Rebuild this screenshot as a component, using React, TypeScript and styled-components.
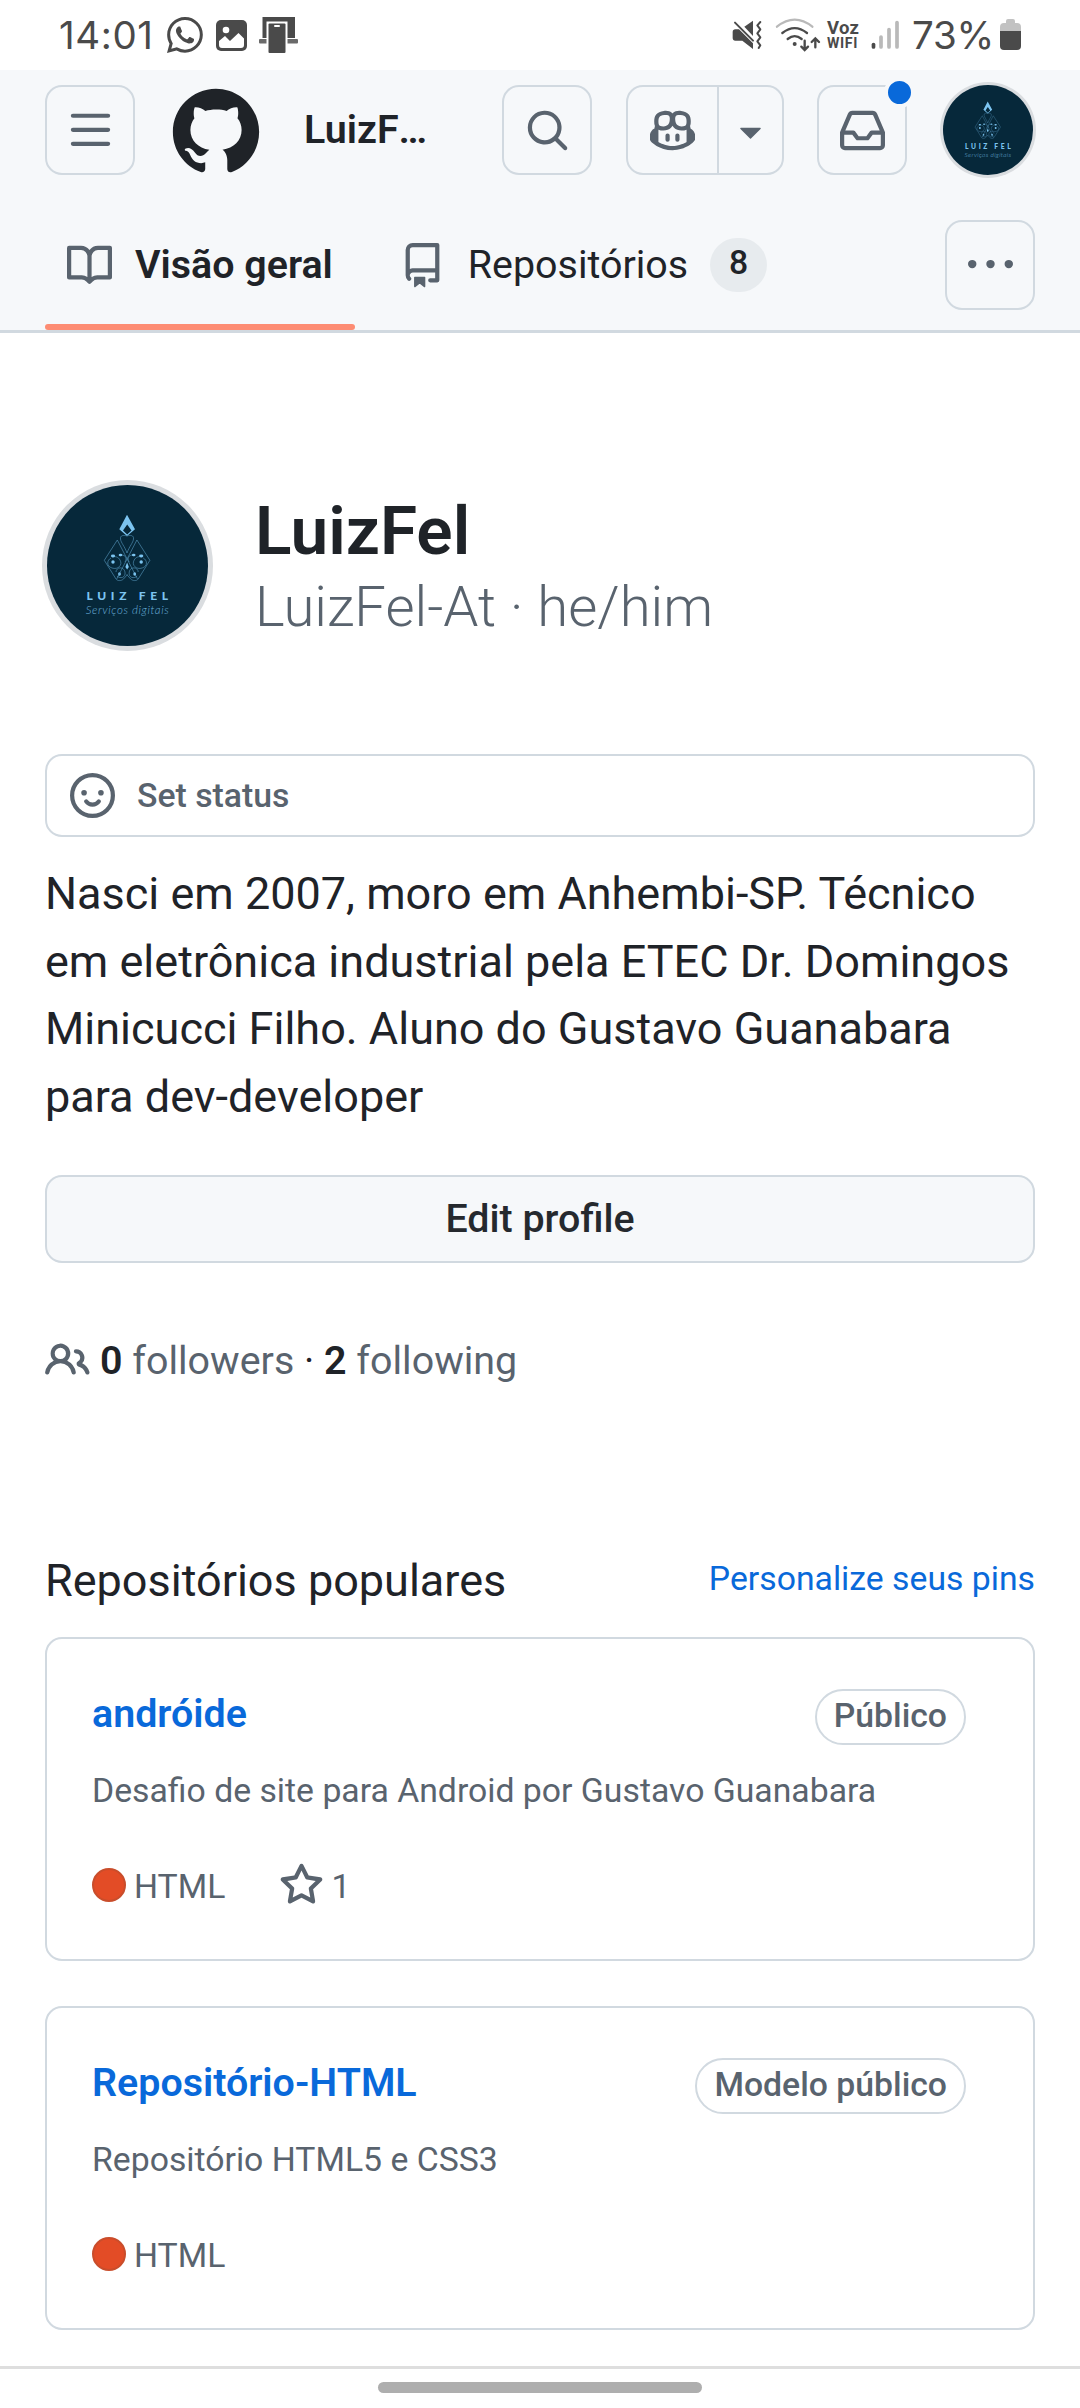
import React from "react";
import styled, { createGlobalStyle } from "styled-components";
import { BsWhatsapp } from "react-icons/bs";

const c = {
  fg: "#1f2328",
  muted: "#59636e",
  border: "#d1d9e0",
  subtle: "#f6f8fa",
  link: "#0969da",
  status: "#4a4a4a",
  faint: "#b9b9b9",
};

const paths = {
  menu: "M1 2.75A.75.75 0 0 1 1.75 2h12.5a.75.75 0 0 1 0 1.5H1.75A.75.75 0 0 1 1 2.75Zm0 5A.75.75 0 0 1 1.75 7h12.5a.75.75 0 0 1 0 1.5H1.75A.75.75 0 0 1 1 7.75ZM1.75 12h12.5a.75.75 0 0 1 0 1.5H1.75a.75.75 0 0 1 0-1.5Z",
  search:
    "M10.68 11.74a6 6 0 0 1-7.922-8.982 6 6 0 0 1 8.982 7.922l3.04 3.04a.749.749 0 0 1-.326 1.275.749.749 0 0 1-.734-.215ZM11.5 7a4.499 4.499 0 1 0-8.997 0A4.499 4.499 0 0 0 11.5 7Z",
  copilot:
    "M7.998 15.035c-4.562 0-7.873-2.914-7.998-3.749V9.338c.085-.628.677-1.686 1.588-2.065.013-.07.024-.143.036-.218.029-.183.06-.384.126-.612-.201-.508-.254-1.084-.254-1.656 0-.87.128-1.769.693-2.484.579-.733 1.494-1.124 2.724-1.261 1.206-.134 2.262.034 2.944.765.05.053.096.108.139.165.044-.057.094-.112.143-.165.682-.731 1.738-.899 2.944-.765 1.23.137 2.145.528 2.724 1.261.566.715.693 1.614.693 2.484 0 .572-.053 1.148-.254 1.656.066.228.098.429.126.612.012.076.024.148.037.218.924.385 1.522 1.471 1.591 2.095v1.872c0 .766-3.351 3.795-8.002 3.795Zm0-1.485c2.28 0 4.584-1.11 5.002-1.433V7.862l-.023-.116c-.49.21-1.075.291-1.727.291-1.146 0-2.059-.327-2.71-.991A3.222 3.222 0 0 1 8 6.303a3.24 3.24 0 0 1-.544.743c-.65.664-1.563.991-2.71.991-.652 0-1.236-.081-1.727-.291l-.023.116v4.255c.419.323 2.722 1.433 5.002 1.433ZM6.762 2.83c-.193-.206-.637-.413-1.682-.297-1.019.113-1.479.404-1.713.7-.247.312-.369.789-.369 1.554 0 .793.129 1.171.308 1.371.162.181.519.379 1.442.379.853 0 1.339-.235 1.638-.54.315-.322.527-.827.617-1.553.117-.935-.037-1.395-.241-1.614Zm4.155-.297c-1.044-.116-1.488.091-1.681.297-.204.219-.359.679-.242 1.614.091.726.303 1.231.618 1.553.299.305.784.54 1.638.54.922 0 1.28-.198 1.442-.379.179-.2.308-.578.308-1.371 0-.765-.123-1.242-.37-1.554-.233-.296-.693-.587-1.713-.7ZM6.25 9.037a.75.75 0 0 1 .75.75v1.501a.75.75 0 0 1-1.5 0V9.787a.75.75 0 0 1 .75-.75Zm4.25.75v1.501a.75.75 0 0 1-1.5 0V9.787a.75.75 0 0 1 1.5 0Z",
  triangle:
    "m4.427 7.427 3.396 3.396a.25.25 0 0 0 .354 0l3.396-3.396A.25.25 0 0 0 11.396 7H4.604a.25.25 0 0 0-.177.427Z",
  inbox:
    "M2.8 2.06A1.75 1.75 0 0 1 4.41 1h7.18c.7 0 1.333.417 1.61 1.06l2.74 6.395c.04.093.06.194.06.295v4.5A1.75 1.75 0 0 1 14.25 15H1.75A1.75 1.75 0 0 1 0 13.25v-4.5c0-.101.02-.202.06-.295Zm1.61.44a.25.25 0 0 0-.23.152L1.887 8H4.75a.75.75 0 0 1 .6.3L6.625 10h2.75l1.275-1.7a.75.75 0 0 1 .6-.3h2.863L11.82 2.652a.25.25 0 0 0-.23-.152Zm10.09 7h-2.875l-1.275 1.7a.75.75 0 0 1-.6.3h-3.5a.75.75 0 0 1-.6-.3L4.375 9.5H1.5v3.75c0 .138.112.25.25.25h12.5a.25.25 0 0 0 .25-.25Z",
  book: "M0 1.75A.75.75 0 0 1 .75 1h4.253c1.227 0 2.317.59 3 1.501A3.743 3.743 0 0 1 11.006 1h4.245a.75.75 0 0 1 .75.75v10.5a.75.75 0 0 1-.75.75h-4.507a2.25 2.25 0 0 0-1.591.659l-.622.621a.75.75 0 0 1-1.06 0l-.622-.621A2.25 2.25 0 0 0 5.258 13H.75a.75.75 0 0 1-.75-.75Zm7.251 10.324.004-5.073-.002-2.253A2.25 2.25 0 0 0 5.003 2.5H1.5v9h3.757a3.75 3.75 0 0 1 1.994.574ZM8.755 4.75l-.004 7.322a3.752 3.752 0 0 1 1.992-.572H14.5v-9h-3.495a2.25 2.25 0 0 0-2.25 2.25Z",
  repo: "M2 2.5A2.5 2.5 0 0 1 4.5 0h8.75a.75.75 0 0 1 .75.75v12.5a.75.75 0 0 1-.75.75h-2.5a.75.75 0 0 1 0-1.5h1.75v-2h-8a1 1 0 0 0-.714 1.7.75.75 0 1 1-1.072 1.05A2.495 2.495 0 0 1 2 11.5Zm10.5-1h-8a1 1 0 0 0-1 1v6.708A2.486 2.486 0 0 1 4.5 9h8ZM5 12.25a.25.25 0 0 1 .25-.25h3.5a.25.25 0 0 1 .25.25v3.25a.25.25 0 0 1-.4.2l-1.45-1.087a.249.249 0 0 0-.3 0L5.4 15.7a.25.25 0 0 1-.4-.2Z",
  dots: "M8 9a1.5 1.5 0 1 0 0-3 1.5 1.5 0 0 0 0 3ZM1.5 9a1.5 1.5 0 1 0 0-3 1.5 1.5 0 0 0 0 3Zm13 0a1.5 1.5 0 1 0 0-3 1.5 1.5 0 0 0 0 3Z",
  people:
    "M2 5.5a3.5 3.5 0 1 1 5.898 2.549 5.508 5.508 0 0 1 3.034 4.084.75.75 0 1 1-1.482.235 4 4 0 0 0-7.9 0 .75.75 0 0 1-1.482-.236A5.507 5.507 0 0 1 3.102 8.05 3.493 3.493 0 0 1 2 5.5ZM11 4a3.001 3.001 0 0 1 2.22 5.018 5.01 5.01 0 0 1 2.56 3.012.749.749 0 0 1-.885.954.752.752 0 0 1-.549-.514 3.507 3.507 0 0 0-2.522-2.372.75.75 0 0 1-.574-.73v-.352a.75.75 0 0 1 .416-.672A1.5 1.5 0 0 0 11 5.5.75.75 0 0 1 11 4Zm-5.5-.5a2 2 0 1 0-.001 3.999A2 2 0 0 0 5.5 3.5Z",
  star: "M8 .25a.75.75 0 0 1 .673.418l1.882 3.815 4.21.612a.75.75 0 0 1 .416 1.279l-3.046 2.97.719 4.192a.751.751 0 0 1-1.088.791L8 12.347l-3.766 1.98a.75.75 0 0 1-1.088-.79l.72-4.194L.818 6.374a.75.75 0 0 1 .416-1.28l4.21-.611L7.327.668A.75.75 0 0 1 8 .25Zm0 2.445L6.615 5.5a.75.75 0 0 1-.564.41l-3.097.45 2.24 2.184a.75.75 0 0 1 .216.664l-.528 3.084 2.769-1.456a.75.75 0 0 1 .698 0l2.77 1.456-.53-3.084a.75.75 0 0 1 .216-.664l2.24-2.183-3.096-.45a.75.75 0 0 1-.564-.41L8 2.694Z",
};

const GlobalStyle = createGlobalStyle`
  *, *::before, *::after { box-sizing: border-box; }
  body {
    margin: 0;
    background: #fff;
    color: ${c.fg};
    font-family: Roboto, "Noto Sans", sans-serif;
  }
  h1, h2, p { margin: 0; font-weight: 400; }
  button { font: inherit; color: inherit; padding: 0; }
  svg { display: block; flex: none; }
`;

const Screen = styled.div`
  width: 1080px;
  height: 2408px;
  display: flex;
  flex-direction: column;
  overflow: hidden;
`;

/* ---------- Android status bar ---------- */

const StatusBar = styled.div`
  height: 70px;
  flex: none;
  display: flex;
  align-items: center;
  justify-content: space-between;
  padding: 0 59px 0 59px;
  color: ${c.status};
`;

const StatusGroup = styled.div`
  display: flex;
  align-items: center;
`;

const StatusText = styled.span<{ $width: number; $tracking: number }>`
  width: ${(p) => p.$width}px;
  font-family: Inter, Roboto, sans-serif;
  font-size: 38.5px;
  line-height: 70px;
  font-weight: 400;
  letter-spacing: ${(p) => p.$tracking}px;
  white-space: nowrap;
`;

const StatusSlot = styled.span<{ $gap: number }>`
  display: flex;
  margin-right: ${(p) => p.$gap}px;
`;

const WifiCall = styled.span`
  width: 44px;
  margin-left: -1px;
  display: flex;
  flex-direction: column;
  font-weight: 700;
  white-space: nowrap;
`;

const CallTop = styled.span`
  font-size: 18.5px;
  line-height: 16px;
  letter-spacing: 0.3px;
`;

const CallBottom = styled.span`
  font-size: 14.2px;
  line-height: 14px;
  letter-spacing: 0.6px;
`;

/* ---------- GitHub header ---------- */

const Header = styled.header`
  height: 263px;
  flex: none;
  background: ${c.subtle};
  box-shadow: inset 0 -3px 0 ${c.border};
`;

const TopRow = styled.div`
  display: flex;
  align-items: center;
  padding: 15px 47px 0 45px;
`;

const IconButton = styled.button`
  width: 90px;
  height: 90px;
  flex: none;
  display: flex;
  align-items: center;
  justify-content: center;
  position: relative;
  background: transparent;
  border: 2px solid ${c.border};
  border-radius: 17px;
  color: ${c.muted};
`;

const LogoLink = styled.a`
  margin-left: 36px;
  color: ${c.fg};
`;

const Context = styled.strong`
  display: flex;
  margin-left: 43px;
  width: 198px;
  font-size: 39.4px;
  line-height: 56px;
  font-weight: 600;
`;

const ButtonPair = styled.div`
  display: flex;
  width: 158px;
  height: 90px;
  margin: 0 33px 0 34px;
  border: 2px solid ${c.border};
  border-radius: 17px;
`;

const PairPart = styled.button<{ $width: number; $divided?: boolean }>`
  width: ${(p) => p.$width}px;
  display: flex;
  align-items: center;
  justify-content: center;
  background: transparent;
  border: 0;
  border-right: ${(p) => (p.$divided ? `2px solid ${c.border}` : "0")};
  color: ${c.muted};
`;

const UnreadDot = styled.span`
  position: absolute;
  top: -10px;
  right: -10px;
  width: 31px;
  height: 31px;
  border: 4px solid ${c.subtle};
  border-radius: 50%;
  background: ${c.link};
`;

const Avatar = styled.span<{ $size: number; $ring: number }>`
  width: ${(p) => p.$size}px;
  height: ${(p) => p.$size}px;
  flex: none;
  display: block;
  overflow: hidden;
  border-radius: 50%;
  background: #06283a;
  box-shadow: 0 0 0 ${(p) => p.$ring}px #dadde0;
`;

const AvatarSlot = styled.a`
  margin-left: 36px;
`;

const Tabs = styled.nav`
  display: flex;
  align-items: flex-start;
  height: 158px;
  padding: 45px 45px 0;
`;

const Tab = styled.a<{ $current?: boolean }>`
  position: relative;
  height: 113px;
  display: flex;
  align-items: center;
  padding: 0 22px 24px 22px;
  font-size: 39.4px;
  line-height: 56px;
  font-weight: ${(p) => (p.$current ? 600 : 400)};
  white-space: nowrap;

  & + & {
    margin-left: 23px;
  }

  svg {
    color: ${c.muted};
    margin: 1px 23px 0 0;
  }

  &::after {
    content: "";
    display: ${(p) => (p.$current ? "block" : "none")};
    position: absolute;
    left: 0;
    right: 0;
    bottom: 3px;
    height: 6px;
    border-radius: 4px;
    background: #fd8c73;
  }
`;

const Counter = styled.span`
  margin: 1px 0 0 22px;
  min-width: 57px;
  height: 54px;
  display: flex;
  align-items: center;
  justify-content: center;
  border-radius: 28px;
  background: #e7ebee;
  font-size: 33.75px;
  line-height: 49px;
  font-weight: 500;
  padding-bottom: 5px;
`;

const MoreButton = styled(IconButton)`
  margin-left: auto;
`;

/* ---------- Profile ---------- */

const Main = styled.main`
  flex: 1;
  display: flex;
  flex-direction: column;
  padding: 152px 45px 0;
`;

const Identity = styled.section`
  display: flex;
  align-items: center;
  padding-left: 2px;
  height: 161px;
`;

const Names = styled.h1`
  margin-left: 47px;
  padding-bottom: 2px;
  display: flex;
  flex-direction: column;
`;

const DisplayName = styled.span`
  font-size: 67.5px;
  line-height: 84px;
  font-weight: 600;
`;

const Login = styled.span`
  font-size: 56.25px;
  line-height: 68px;
  font-weight: 300;
  color: ${c.muted};
`;

const StatusBox = styled.button`
  margin-top: 108px;
  height: 83px;
  display: flex;
  align-items: center;
  padding-left: 23px;
  gap: 22px;
  background: #fff;
  border: 2px solid ${c.border};
  border-radius: 17px;
  color: ${c.muted};
  font-size: 33.75px;
  line-height: 50px;
  font-weight: 500;
`;

const Bio = styled.p`
  margin-top: 23px;
  font-size: 45px;
  line-height: 67.5px;
`;

const EditButton = styled.button`
  margin-top: 45px;
  height: 88px;
  flex: none;
  background: ${c.subtle};
  border: 2px solid ${c.border};
  border-radius: 17px;
  color: #25292e;
  font-size: 39.4px;
  line-height: 56px;
  font-weight: 500;
`;

const Follow = styled.div`
  margin-top: 64px;
  height: 67px;
  display: flex;
  align-items: center;
  font-size: 39.4px;
  line-height: 67px;
  white-space: pre;
  color: ${c.muted};

  svg {
    margin-right: 10px;
  }
`;

const Count = styled.b`
  font-weight: 600;
  color: ${c.fg};
`;

const Sep = styled.span`
  color: ${c.fg};
`;

const SectionHead = styled.div`
  margin-top: 153px;
  height: 68px;
  flex: none;
  display: flex;
  align-items: center;
  justify-content: space-between;
`;

const SectionTitle = styled.h2`
  font-size: 45px;
  line-height: 68px;
`;

const PinsLink = styled.a`
  font-size: 33.75px;
  line-height: 50px;
  padding-bottom: 5px;
  color: ${c.link};
`;

const CardList = styled.div`
  margin-top: 22px;
`;

const Card = styled.article`
  height: 324px;
  border: 2px solid ${c.border};
  border-radius: 17px;
  padding: 45px 67px 0 45px;

  & + & {
    margin-top: 45px;
  }
`;

const CardHead = styled.div`
  display: flex;
  align-items: flex-start;
  justify-content: space-between;
`;

const RepoLink = styled.a`
  font-size: 39.4px;
  line-height: 59px;
  font-weight: 600;
  color: ${c.link};
`;

const Label = styled.span`
  height: 56px;
  margin-top: 5px;
  padding: 0 17px;
  border: 2px solid ${c.border};
  border-radius: 28px;
  font-size: 33.75px;
  line-height: 50px;
  font-weight: 500;
  color: ${c.muted};
`;

const Description = styled.p`
  margin-top: 21px;
  font-size: 33.75px;
  line-height: 50px;
  color: ${c.muted};
`;

const Meta = styled.div`
  margin-top: 46px;
  height: 50px;
  display: flex;
  align-items: center;
  font-size: 33.75px;
  line-height: 50px;
  color: ${c.muted};
`;

const LanguageDot = styled.span`
  width: 34px;
  height: 34px;
  margin: 0 8px 4px 0;
  border: 2px solid #c94d2b;
  border-radius: 50%;
  background: #e34c26;
`;

const Stars = styled.span`
  margin-left: 54px;
  display: flex;
  align-items: center;
  gap: 7px;

  svg {
    margin-bottom: 3px;
  }
`;

const BottomBar = styled.footer`
  height: 42px;
  flex: none;
  display: flex;
  justify-content: center;
  padding-top: 13px;
  border-top: 3px solid #dedede;
`;

const HomeHandle = styled.div`
  width: 324px;
  height: 11px;
  border-radius: 6px;
  background: #aeaeae;
`;

/* ---------- Drawings ---------- */

function Octicon({ d }: { d: string }) {
  return (
    <svg width="45" height="45" viewBox="0 0 16 16" fill="currentColor">
      <path d={d} />
    </svg>
  );
}

function Smiley() {
  return (
    <svg width="45" height="45" viewBox="0 0 16 16" fill="currentColor">
      <circle cx="8" cy="8" r="7.25" fill="none" stroke="currentColor" strokeWidth="1.5" />
      <circle cx="5" cy="7" r="1" />
      <circle cx="11" cy="7" r="1" />
      <path
        d="M5.75 10.1c.5.72 1.3 1.15 2.25 1.15s1.75-.43 2.25-1.15"
        fill="none"
        stroke="currentColor"
        strokeWidth="1.5"
        strokeLinecap="round"
      />
    </svg>
  );
}

function GitHubMark() {
  return (
    <svg width="90" height="90" viewBox="0 0 24 24" fill="currentColor">
      <path d="M10.226 17.284c-2.965-.36-5.054-2.493-5.054-5.256 0-1.123.404-2.336 1.078-3.144-.292-.741-.247-2.314.09-2.965.898-.112 2.111.36 2.83 1.01.853-.269 1.752-.404 2.853-.404 1.1 0 1.999.135 2.807.382.696-.629 1.932-1.1 2.83-.988.315.606.36 2.179.067 2.942.72.854 1.101 2 1.101 3.167 0 2.763-2.089 4.852-5.098 5.234.763.494 1.28 1.572 1.28 2.807v2.336c0 .674.561 1.056 1.235.786 4.066-1.55 7.255-5.615 7.255-10.646C23.5 6.188 18.334 1 11.978 1 5.62 1 .5 6.188.5 12.545c0 4.986 3.167 9.12 7.435 10.669.606.225 1.19-.18 1.19-.786V20.63a2.9 2.9 0 0 1-1.078.224c-1.483 0-2.359-.808-2.987-2.313-.247-.607-.517-.966-1.034-1.033-.27-.023-.359-.135-.359-.27 0-.27.45-.471.898-.471.652 0 1.213.404 1.797 1.235.45.651.921.943 1.483.943.561 0 .92-.202 1.437-.719.382-.381.674-.718.944-.943" />
    </svg>
  );
}

function Emblem() {
  const blue = "#7cc4f0";
  const half = (
    <>
      <path d="M77.3 60 64.3 80.3 76 99c1.5 2.2 5.5 2 7.5 0L87.5 94.5M77.3 60 97.5 99" />
      <path d="M71 78c-4 2-5 8 1 10s11-3 8-8c-1.5-3-5-4-8-3M80 76c4-3 8 2 5 6M76 92c0-5 8-6 9 0s-5 7-8 4" />
      <g fill={blue} stroke="none">
        <ellipse cx="73" cy="76" rx="2.1" ry="1.4" />
        <ellipse cx="73" cy="82" rx="1.7" ry="1.7" />
        <ellipse cx="80.5" cy="75" rx="1.8" ry="1.3" />
        <ellipse cx="79.5" cy="94" rx="1.4" ry="1.7" />
      </g>
    </>
  );
  return (
    <svg width="100%" height="100%" viewBox="7 5 161 161">
      <path
        fill={blue}
        fillRule="evenodd"
        d="M87 34.7 95 49.3 87 56 79.3 49.3ZM87.2 44.5 83 50.5 87.2 54.5 91.5 50.5Z"
      />
      <g fill="none" stroke="#5b9cc3" strokeWidth=".6">
        <path d="M87 56c-3-1-7-1-6.5 3 .5 4 4 7 6.5 14 2.5-7 6-10 6.5-14 .5-4-3.5-4-6.5-3Z" />
        {half}
        <g transform="matrix(-1 0 0 1 174.2 0)">{half}</g>
      </g>
      <path fill={blue} d="M87.1 82.5 88.8 87 87.1 89.5 85.4 87Z" />
      <text
        x="46.5"
        y="120"
        fill={blue}
        fontFamily="Lato, sans-serif"
        fontWeight="900"
        fontSize="12"
        textLength="81.5"
      >
        LUIZ FEL
      </text>
      <text
        x="45.7"
        y="134.3"
        fill="#6bb0da"
        fontFamily="Lato, sans-serif"
        fontStyle="italic"
        fontWeight="300"
        fontSize="11.5"
        textLength="83"
      >
        Serviços digitais
      </text>
    </svg>
  );
}

function PhotoIcon() {
  return (
    <svg width="31" height="31" viewBox="0 0 31 31">
      <rect width="31" height="31" rx="5" fill={c.status} />
      <circle cx="10" cy="10" r="3.3" fill="#fff" />
      <path d="M3 21 9 16l5 5 8.5-8L28 18.5V25a3 3 0 0 1-3 3H6a3 3 0 0 1-3-3Z" fill="#fff" />
    </svg>
  );
}

function CastIcon() {
  return (
    <svg width="39" height="36" viewBox="0 0 39 36">
      <rect x="3.5" y="0" width="32.5" height="21" fill={c.status} />
      <rect x="0" y="22" width="39" height="4.5" rx="1" fill="#6a6a6a" />
      <rect x="7.5" y="4.5" width="21" height="32" fill="#fff" />
      <rect x="9.5" y="6.5" width="17" height="29.5" rx="1" fill={c.status} />
      <rect x="15" y="8" width="6" height="2" rx="1" fill="#fff" />
    </svg>
  );
}

function MuteIcon() {
  return (
    <svg width="30" height="30" viewBox="35 30 90 90" fill={c.status}>
      <path d="M37 66c0-5 3-8 8-8h11l42 42v17L66 92H45c-5 0-8-3-8-8Z" />
      <path d="M72 50 98 32v46Z" />
      <path d="m44 38 54 54" stroke={c.status} strokeWidth="6" strokeLinecap="round" />
      <path
        d="m120 36-9 10 9 12-9 12 9 12-9 12 9 12-5 8"
        fill="none"
        stroke={c.status}
        strokeWidth="6"
        strokeLinecap="round"
        strokeLinejoin="round"
      />
    </svg>
  );
}

function WifiIcon() {
  return (
    <svg width="46" height="34" viewBox="165 22 138 102" fill="none" strokeWidth="7" strokeLinecap="round">
      <path d="M171 48q53-42 106 0" stroke={c.faint} />
      <g stroke={c.status}>
        <path d="M187 67q37-29 74 0" />
        <path d="M203 85q21-17 42 0" />
        <path d="M254 90v28m-10-10 10 10 10-10" />
        <path d="M286 110V84m-11 10 11-11 11 11" />
      </g>
      <circle cx="224" cy="100" r="6" fill={c.status} />
    </svg>
  );
}

function SignalIcon() {
  return (
    <svg width="28" height="30" viewBox="0 0 28 30" strokeWidth="3.7" strokeLinecap="round">
      <path d="M2.5 24.5v2.5" stroke={c.status} />
      <path d="M10 17v10M18 9.5V27M26 2.5V27" stroke={c.faint} />
    </svg>
  );
}

function BatteryIcon() {
  return (
    <svg width="21" height="32" viewBox="0 0 21 32">
      <path
        d="M6 2a2 2 0 0 1 2-2h5a2 2 0 0 1 2 2v2h2a4 4 0 0 1 4 4v8H0V8a4 4 0 0 1 4-4h2Z"
        fill="#c2c2c2"
      />
      <path d="M0 12h21v15a4 4 0 0 1-4 4H4a4 4 0 0 1-4-4Z" fill={c.status} />
    </svg>
  );
}

/* ---------- Page ---------- */

type Repo = { name: string; label: string; description: string; language: string; stars?: number };

const repos: Repo[] = [
  {
    name: "andróide",
    label: "Público",
    description: "Desafio de site para Android por Gustavo Guanabara",
    language: "HTML",
    stars: 1,
  },
  { name: "Repositório-HTML", label: "Modelo público", description: "Repositório HTML5 e CSS3", language: "HTML" },
];

function RepoCard({ repo }: { repo: Repo }) {
  return (
    <Card>
      <CardHead>
        <RepoLink>{repo.name}</RepoLink>
        <Label>{repo.label}</Label>
      </CardHead>
      <Description>{repo.description}</Description>
      <Meta>
        <LanguageDot />
        {repo.language}
        {repo.stars !== undefined && (
          <Stars>
            <Octicon d={paths.star} />
            {repo.stars}
          </Stars>
        )}
      </Meta>
    </Card>
  );
}

export default function App() {
  return (
    <Screen>
      <GlobalStyle />
      <StatusBar>
        <StatusGroup>
          <StatusText $width={108} $tracking={0.6}>
            14:01
          </StatusText>
          <StatusSlot $gap={13}>
            <BsWhatsapp size={36} />
          </StatusSlot>
          <StatusSlot $gap={12}>
            <PhotoIcon />
          </StatusSlot>
          <CastIcon />
        </StatusGroup>
        <StatusGroup>
          <StatusSlot $gap={13}>
            <MuteIcon />
          </StatusSlot>
          <StatusSlot $gap={7}>
            <WifiIcon />
          </StatusSlot>
          <WifiCall>
            <CallTop>Voz</CallTop>
            <CallBottom>WIFI</CallBottom>
          </WifiCall>
          <StatusSlot $gap={13}>
            <SignalIcon />
          </StatusSlot>
          <StatusText $width={88} $tracking={-0.2}>
            73%
          </StatusText>
          <BatteryIcon />
        </StatusGroup>
      </StatusBar>

      <Header>
        <TopRow>
          <IconButton aria-label="Menu">
            <Octicon d={paths.menu} />
          </IconButton>
          <LogoLink>
            <GitHubMark />
          </LogoLink>
          <Context>
            <span>LuizF</span>
            <span>…</span>
          </Context>
          <IconButton aria-label="Search">
            <Octicon d={paths.search} />
          </IconButton>
          <ButtonPair>
            <PairPart $width={91} $divided aria-label="Copilot">
              <Octicon d={paths.copilot} />
            </PairPart>
            <PairPart $width={63} aria-label="Copilot menu">
              <Octicon d={paths.triangle} />
            </PairPart>
          </ButtonPair>
          <IconButton aria-label="Notifications">
            <Octicon d={paths.inbox} />
            <UnreadDot />
          </IconButton>
          <AvatarSlot>
            <Avatar $size={90} $ring={3}>
              <Emblem />
            </Avatar>
          </AvatarSlot>
        </TopRow>
        <Tabs>
          <Tab $current>
            <Octicon d={paths.book} />
            Visão geral
          </Tab>
          <Tab>
            <Octicon d={paths.repo} />
            Repositórios
            <Counter>8</Counter>
          </Tab>
          <MoreButton aria-label="More">
            <Octicon d={paths.dots} />
          </MoreButton>
        </Tabs>
      </Header>

      <Main>
        <Identity>
          <Avatar $size={161} $ring={5}>
            <Emblem />
          </Avatar>
          <Names>
            <DisplayName>LuizFel</DisplayName>
            <Login>LuizFel-At · he/him</Login>
          </Names>
        </Identity>
        <StatusBox>
          <Smiley />
          Set status
        </StatusBox>
        <Bio>
          Nasci em 2007, moro em Anhembi-SP. Técnico em eletrônica industrial pela ETEC Dr. Domingos
          Minicucci Filho. Aluno do Gustavo Guanabara para dev-developer
        </Bio>
        <EditButton>Edit profile</EditButton>
        <Follow>
          <Octicon d={paths.people} />
          <Count>0</Count>
          {" followers"}
          <Sep>{" · "}</Sep>
          <Count>2</Count>
          {" following"}
        </Follow>
        <SectionHead>
          <SectionTitle>Repositórios populares</SectionTitle>
          <PinsLink>Personalize seus pins</PinsLink>
        </SectionHead>
        <CardList>
          {repos.map((repo) => (
            <RepoCard key={repo.name} repo={repo} />
          ))}
        </CardList>
      </Main>
      <BottomBar>
        <HomeHandle />
      </BottomBar>
    </Screen>
  );
}
